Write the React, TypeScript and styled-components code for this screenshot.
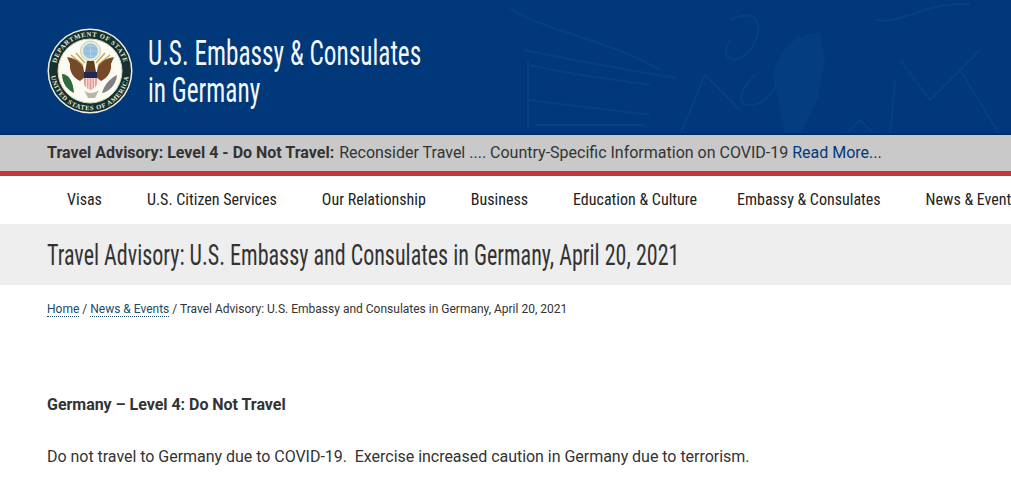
import React from "react";
import styled, { createGlobalStyle } from "styled-components";

const Global = createGlobalStyle`
  html, body { margin: 0; padding: 0; background: #fff; overflow: hidden; }
  body { font-family: Roboto, "Liberation Sans", sans-serif; color: #333; }
  #root { width: 1011px; height: 487px; overflow: hidden; }
`;

const condensed = `"Liberation Sans Narrow", "Roboto Condensed", Roboto, sans-serif`;

const Header = styled.header`
  position: relative;
  height: 135px;
  background: #00387a;
  border-bottom: 2px solid #002f68;
  display: flex;
  align-items: center;
  padding: 0 0 0 47px;
  gap: 15px;
  overflow: hidden;
  box-sizing: border-box;
`;
const Watermark = styled.svg`
  position: absolute;
  left: 480px;
  top: 0;
  width: 531px;
  height: 135px;
  fill: none;
  stroke: #064080;
  stroke-width: 2;
`;
const SealSvg = styled.svg`
  width: 86px;
  height: 86px;
  flex: none;
  position: relative;
  margin-top: 8px;
`;
const SiteTitle = styled.h1`
  margin: 11px 0 0;
  font-family: ${condensed};
  font-weight: 400;
  font-size: 35px;
  line-height: 37px;
  color: #f4f8fc;
  position: relative;
  white-space: nowrap;
  transform: scaleX(0.722);
  transform-origin: left center;
`;
const Alert = styled.div`
  background: #c9c9c9;
  border-bottom: 5px solid #bf363d;
  padding: 0 0 2px 47px;
  box-sizing: content-box;
  height: 34px;
  display: flex;
  align-items: center;
  font-size: 16px;
  color: #333;
  white-space: nowrap;
`;
const AlertBold = styled.strong`
  font-weight: 700;
  margin-right: 5px;
`;
const AlertLink = styled.a`
  color: #00387a;
  margin-left: 4px;
  text-decoration: none;
`;
const Nav = styled.nav`
  height: 48px;
  padding-bottom: 2px;
  box-sizing: border-box;
  display: flex;
  align-items: center;
  white-space: nowrap;
  padding-left: 67px;
  font-family: ${condensed};
  font-size: 16px;
  color: #222;
`;
const NavItem = styled.a<{ $gap: number }>`
  margin-right: ${(p) => p.$gap}px;
  flex: none;
`;
const TitleBand = styled.div`
  height: 61px;
  background: #eee;
  padding-left: 47px;
  display: flex;
  align-items: center;
`;
const PageTitle = styled.h2`
  margin: 0;
  font-family: ${condensed};
  font-weight: 400;
  font-size: 29px;
  color: #333;
  white-space: nowrap;
  transform: scaleX(0.76);
  transform-origin: left center;
`;
const Crumbs = styled.div`
  margin: 15px 0 0 47px;
  font-size: 12px;
  line-height: 18px;
  color: #333;
`;
const Crumb = styled.a`
  color: #204a6a;
  border-bottom: 1px dotted #204a6a;
`;
const Content = styled.main`
  padding: 75px 47px 0;
  font-size: 16px;
  line-height: 24px;
  color: #333;
  letter-spacing: -0.03px;
`;
const Lead = styled.p`
  margin: 0 0 28px;
  font-weight: 700;
`;
const Para = styled.p`
  margin: 0;
  white-space: pre-wrap;
`;

function Seal() {
  return (
    <SealSvg viewBox="0 0 86 86">
      <defs>
        <path id="topArc" d="M 8.5 43 A 34.5 34.5 0 0 1 77.5 43" />
        <path id="botArc" d="M 3.8 43 A 39.2 39.2 0 0 0 82.2 43" />
      </defs>
      <circle cx="43" cy="43" r="42.5" fill="#eeeee2" />
      <circle cx="43" cy="43" r="41" fill="#14302f" />
      <circle cx="43" cy="43" r="32" fill="#fbfaf3" stroke="#d8d3b0" />
      <text fontFamily="Liberation Serif, serif" fontSize="6.6" fontWeight="700" fill="#ecead8" letterSpacing=".7">
        <textPath href="#topArc" startOffset="50%" textAnchor="middle">DEPARTMENT OF STATE</textPath>
      </text>
      <text fontFamily="Liberation Serif, serif" fontSize="6.6" fontWeight="700" fill="#ecead8" letterSpacing=".7">
        <textPath href="#botArc" startOffset="50%" textAnchor="middle">UNITED STATES OF AMERICA</textPath>
      </text>
      <circle cx="43.5" cy="23" r="10" fill="#e9edd8" stroke="#c9cfb8" strokeWidth="1" />
      <circle cx="43.5" cy="23" r="7.5" fill="#94bedd" />
      <path d="M36 23 H51 M43.5 15.5 V30.5 M38 18 H49 M38 28 H49" stroke="#bcd6e8" strokeWidth=".7" fill="none" />
      <path d="M24 27 L36 37 M63 27 L51 37 M29 25 L38 35 M58 25 L49 35" stroke="#c9a95a" strokeWidth="1.6" fill="none" />
      <path d="M36 38 C30 31 25 30 20 29 L23 36 C22 44 27 50 33 53 L38 49 Z" fill="#75492a" />
      <path d="M51 38 C57 31 62 30 67 29 L64 36 C65 44 60 50 54 53 L49 49 Z" fill="#75492a" />
      <path d="M40 33 L47 33 L49 44 H38 Z" fill="#5e3d22" />
      <path d="M37 44 H50 V55 C50 59 46 61 43.5 62 C41 61 37 59 37 55 Z" fill="#ea9c96" />
      <path d="M39.5 50 V60 M42 50 V61 M45 50 V61 M47.5 50 V60" stroke="#fbeae6" strokeWidth=".9" fill="none" />
      <rect x="37" y="44" width="13" height="6" fill="#1b2b55" />
      <path d="M37 62 C40 66 47 66 52 62 L48 70 H41 Z" fill="#b5b7aa" />
      <path d="M15 46 C21 46 26 52 27 65 C21 62 15 56 15 46 Z" fill="#2f6b3c" />
      <path d="M70 47 C64 50 58 55 55 65 C61 64 69 58 70 47 Z" fill="#7f8184" />
    </SealSvg>
  );
}

export default function App() {
  const nav: [string, number][] = [
    ["Visas", 45], ["U.S. Citizen Services", 45], ["Our Relationship", 45], ["Business", 45],
    ["Education & Culture", 40], ["Embassy & Consulates", 45], ["News & Events", 0],
  ];
  return (
    <>
      <Global />
      <Header>
        <Watermark viewBox="0 0 531 135">
          <path d="M293 75 C300 45 320 32 340 33 L345 60 L338 100 L320 135 L305 135 Z" fill="#053e7f" stroke="none" />
          <path d="M30 8 C60 30 130 40 180 70 M45 50 C90 60 150 70 195 78 M50 65 C90 75 140 80 170 85 M48 100 C90 105 130 110 170 115 M55 125 H165 M48 60 V130" />
          <path d="M250 20 C280 5 285 30 270 50 C250 70 240 55 250 40 M225 75 L260 110 M200 135 L225 75 M275 75 C260 90 255 105 270 105 C290 105 300 80 300 70" />
          <path d="M420 60 L450 100 L500 50 M480 70 L520 135 M410 135 L415 80 M365 135 L380 120 L395 135 M395 20 C420 25 450 0 490 5" />
        </Watermark>
        <Seal />
        <SiteTitle>U.S. Embassy &amp; Consulates<br />in Germany</SiteTitle>
      </Header>
      <Alert>
        <AlertBold>Travel Advisory: Level 4 - Do Not Travel:</AlertBold>
        Reconsider Travel .... Country-Specific Information on COVID-19
        <AlertLink>Read More...</AlertLink>
      </Alert>
      <Nav>
        {nav.map(([t, g]) => <NavItem key={t} $gap={g}>{t}</NavItem>)}
      </Nav>
      <TitleBand>
        <PageTitle>Travel Advisory: U.S. Embassy and Consulates in Germany, April 20, 2021</PageTitle>
      </TitleBand>
      <Crumbs>
        <Crumb>Home</Crumb> / <Crumb>News &amp; Events</Crumb> / Travel Advisory: U.S. Embassy and Consulates in Germany, April 20, 2021
      </Crumbs>
      <Content>
        <Lead>Germany – Level 4: Do Not Travel</Lead>
        <Para>{"Do not travel to Germany due to COVID-19.  Exercise increased caution in Germany due to terrorism."}</Para>
      </Content>
    </>
  );
}
